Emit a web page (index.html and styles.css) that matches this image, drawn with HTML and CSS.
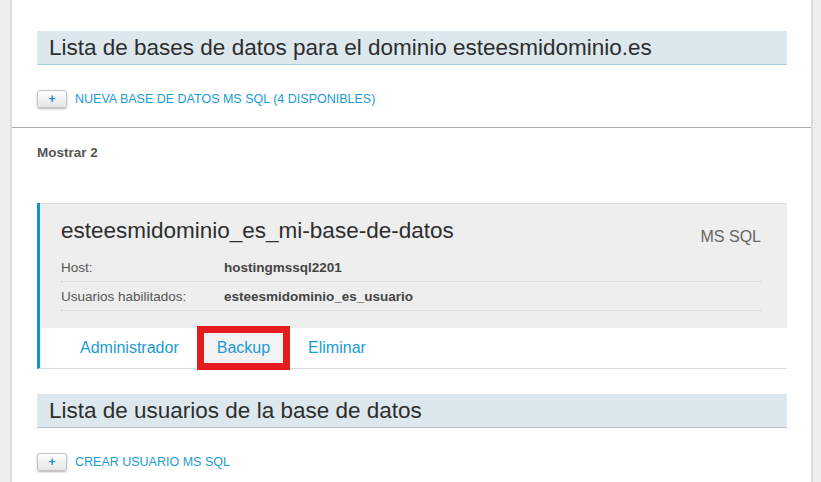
FILE: index.html
```html
<!DOCTYPE html>
<html>
<head>
    <title>Bases de datos MS SQL</title>
    <link rel="stylesheet" href="styles.css">
</head>
<body>
<div class="panel">
    <div class="section section-top">
        <h2 class="list-title">Lista de bases de datos para el dominio esteesmidominio.es</h2>
        <div class="add-row">
            <button class="plus-button">+</button>
            <a href="#" class="add-link">Nueva base de datos MS SQL (4 disponibles)</a>
        </div>
    </div>

    <hr class="divider">

    <div class="section">
        <p class="count">Mostrar 2</p>

        <div class="db-card">
            <div class="db-info">
                <div class="db-head">
                    <span class="db-name">esteesmidominio_es_mi-base-de-datos</span>
                    <span class="db-type">MS SQL</span>
                </div>
                <div class="db-row">
                    <span class="db-label">Host:</span>
                    <span class="db-value">hostingmssql2201</span>
                </div>
                <div class="db-row">
                    <span class="db-label">Usuarios habilitados:</span>
                    <span class="db-value">esteesmidominio_es_usuario</span>
                </div>
            </div>
            <div class="db-actions">
                <a href="#" class="action">Administrador</a>
                <a href="#" class="action action-marked">Backup</a>
                <a href="#" class="action">Eliminar</a>
            </div>
        </div>

        <h2 class="list-title users-title">Lista de usuarios de la base de datos</h2>
        <div class="add-row">
            <button class="plus-button">+</button>
            <a href="#" class="add-link">Crear usuario MS SQL</a>
        </div>
    </div>
</div>
</body>
</html>
```

FILE: styles.css
```css
html, body {
    margin: 0;
    padding: 0;
}

body {
    background-color: #eeeeee;
    font-family: "Liberation Sans", Arial, sans-serif;
    color: #333;
}

.panel {
    background-color: #fff;
    margin: 0 8px 0 10px;
    border-left: 2px solid #dcdcdc;
    border-right: 2px solid #dcdcdc;
    min-height: 482px;
    box-sizing: border-box;
}

.section {
    padding: 0 24px 0 25px;
}

.section-top {
    padding-top: 31px;
}

.list-title {
    margin: 0;
    height: 33px;
    line-height: 33px;
    padding-left: 12px;
    font-size: 22.5px;
    font-weight: normal;
    color: #2e2e2e;
    background-color: #dce8ee;
    border-bottom: 1px solid #a6cfe2;
    white-space: nowrap;
}

.users-title {
    margin-top: 25px;
    border-bottom-color: #aec3cd;
}

.add-row {
    display: flex;
    align-items: center;
    margin-top: 25px;
    height: 18px;
}

.plus-button {
    width: 30px;
    height: 18px;
    padding: 0;
    margin-right: 8px;
    border: 1px solid #c4c4c4;
    border-radius: 3px;
    background: linear-gradient(#ffffff, #e6e6e6);
    box-shadow: 0 1px 2px rgba(0, 0, 0, 0.3);
    color: #1a8fc8;
    font-family: "Liberation Sans", Arial, sans-serif;
    font-size: 12px;
    font-weight: bold;
    line-height: 14px;
}

.add-link {
    color: #1a9bd6;
    font-size: 12.5px;
    text-transform: uppercase;
    text-decoration: none;
}

.divider {
    margin: 19px 0 0 0;
    border: none;
    border-top: 1px solid #acacac;
    height: 0;
}

.count {
    margin: 0;
    padding-top: 17px;
    font-size: 13.5px;
    line-height: 16px;
    font-weight: bold;
    color: #555;
}

.db-card {
    margin-top: 42px;
    border-left: 3px solid #0c96c9;
    border-bottom: 1px solid #dddddd;
}

.db-info {
    background-color: #eeeeee;
    border-top: 1px solid #dddddd;
    padding: 12px 26px 17px 21px;
}

.db-head {
    display: flex;
    justify-content: space-between;
    height: 30px;
    margin-bottom: 7px;
}

.db-name {
    font-size: 22.5px;
    line-height: 30px;
    color: #2e2e2e;
}

.db-type {
    font-size: 16px;
    line-height: 18px;
    padding-top: 12px;
    color: #666;
}

.db-row {
    display: flex;
    align-items: center;
    height: 28px;
    border-bottom: 1px dotted #cfcfcf;
}

.db-label {
    width: 163px;
    font-size: 13.5px;
    color: #555;
}

.db-value {
    font-size: 13.5px;
    font-weight: bold;
    color: #444;
}

.db-actions {
    display: flex;
    align-items: center;
    gap: 12px;
    height: 40px;
    padding-left: 27px;
    background-color: #fff;
}

.action {
    display: block;
    padding: 0 13px;
    height: 30px;
    line-height: 30px;
    font-size: 16px;
    color: #1a9bd6;
    text-decoration: none;
}

.action-marked {
    background-color: #f3f3f3;
    outline: 7px solid #e51c1f;
}
```
